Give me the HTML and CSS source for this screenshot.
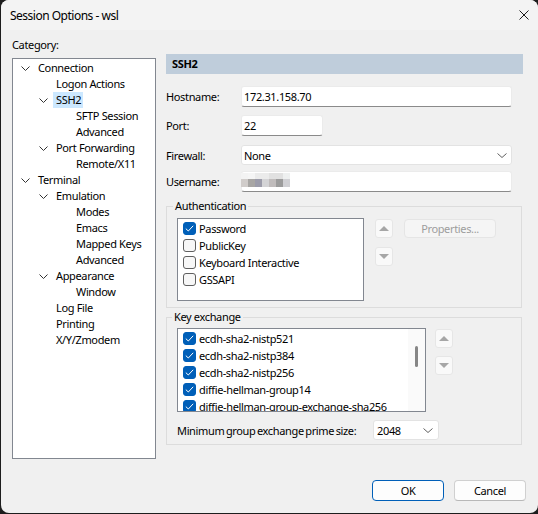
FILE: index.html
```html
<!DOCTYPE html>
<html>
<head>
<meta charset="utf-8">
<title>Session Options - wsl</title>
<link rel="stylesheet" href="styles.css">
</head>
<body>
<div class="window">
  <div class="titlebar">
    <span class="title">Session Options - wsl</span>
    <span class="close"><svg width="10" height="10" viewBox="0 0 10 10"><path d="M0.5 0.5 L9.5 9.5 M9.5 0.5 L0.5 9.5" stroke="#1a1a1a" stroke-width="1" fill="none"/></svg></span>
  </div>
  <div class="main">
    <div class="left">
      <div class="cat-label">Category:</div>
      <div class="tree">
        <div class="node l1"><span class="twisty"><svg width="9" height="5" viewBox="0 0 9 5"><path d="M0.5 0.5 L4.5 4.5 L8.5 0.5" stroke="#333" fill="none"/></svg></span><span class="txt">Connection</span></div>
        <div class="node l2"><span class="twisty"></span><span class="txt">Logon Actions</span></div>
        <div class="node l2"><span class="twisty"><svg width="9" height="5" viewBox="0 0 9 5"><path d="M0.5 0.5 L4.5 4.5 L8.5 0.5" stroke="#333" fill="none"/></svg></span><span class="txt sel">SSH2</span></div>
        <div class="node l3"><span class="twisty"></span><span class="txt">SFTP Session</span></div>
        <div class="node l3"><span class="twisty"></span><span class="txt">Advanced</span></div>
        <div class="node l2"><span class="twisty"><svg width="9" height="5" viewBox="0 0 9 5"><path d="M0.5 0.5 L4.5 4.5 L8.5 0.5" stroke="#333" fill="none"/></svg></span><span class="txt">Port Forwarding</span></div>
        <div class="node l3"><span class="twisty"></span><span class="txt">Remote/X11</span></div>
        <div class="node l1"><span class="twisty"><svg width="9" height="5" viewBox="0 0 9 5"><path d="M0.5 0.5 L4.5 4.5 L8.5 0.5" stroke="#333" fill="none"/></svg></span><span class="txt">Terminal</span></div>
        <div class="node l2"><span class="twisty"><svg width="9" height="5" viewBox="0 0 9 5"><path d="M0.5 0.5 L4.5 4.5 L8.5 0.5" stroke="#333" fill="none"/></svg></span><span class="txt">Emulation</span></div>
        <div class="node l3"><span class="twisty"></span><span class="txt">Modes</span></div>
        <div class="node l3"><span class="twisty"></span><span class="txt">Emacs</span></div>
        <div class="node l3"><span class="twisty"></span><span class="txt">Mapped Keys</span></div>
        <div class="node l3"><span class="twisty"></span><span class="txt">Advanced</span></div>
        <div class="node l2"><span class="twisty"><svg width="9" height="5" viewBox="0 0 9 5"><path d="M0.5 0.5 L4.5 4.5 L8.5 0.5" stroke="#333" fill="none"/></svg></span><span class="txt">Appearance</span></div>
        <div class="node l3"><span class="twisty"></span><span class="txt">Window</span></div>
        <div class="node l2"><span class="twisty"></span><span class="txt">Log File</span></div>
        <div class="node l2"><span class="twisty"></span><span class="txt">Printing</span></div>
        <div class="node l2"><span class="twisty"></span><span class="txt">X/Y/Zmodem</span></div>
      </div>
    </div>
    <div class="panel">
      <div class="header">SSH2</div>
      <div class="row r-host"><span class="lbl">Hostname:</span><div class="input wide">172.31.158.70</div></div>
      <div class="row r-port"><span class="lbl">Port:</span><div class="input narrow">22</div></div>
      <div class="row r-fw"><span class="lbl">Firewall:</span><div class="combo wide"><span>None</span><svg width="10" height="5" viewBox="0 0 10 5"><path d="M0.5 0.5 L5 4.5 L9.5 0.5" stroke="#606060" fill="none"/></svg></div></div>
      <div class="row r-user"><span class="lbl">Username:</span><div class="input wide"><div class="blur">
        <i class="c1"></i><i class="c2"></i><i class="c3"></i><i class="c3"></i><i class="c4"></i><i class="c4"></i><i class="c5"></i>
        <i class="d1"></i><i class="d2"></i><i class="d3"></i><i class="d4"></i><i class="d5"></i><i class="d6"></i><i class="d7"></i>
      </div></div></div>

      <fieldset class="group auth">
        <legend>Authentication</legend>
        <div class="group-body">
          <div class="listbox auth-list">
            <div class="item"><span class="cb on"><svg width="9" height="7" viewBox="0 0 9 7"><path d="M0.8 3.6 L3.3 6 L8.2 0.8" stroke="#fff" stroke-width="1" fill="none"/></svg></span>Password</div>
            <div class="item"><span class="cb"></span>PublicKey</div>
            <div class="item"><span class="cb"></span>Keyboard Interactive</div>
            <div class="item"><span class="cb"></span>GSSAPI</div>
          </div>
          <div class="arrows">
            <div class="arrow"><svg width="10" height="5" viewBox="0 0 10 5"><path d="M0 5 L5 0 L10 5 Z" fill="#a6a6a6"/></svg></div>
            <div class="arrow"><svg width="10" height="5" viewBox="0 0 10 5"><path d="M0 0 L5 5 L10 0 Z" fill="#a6a6a6"/></svg></div>
          </div>
          <div class="btn props">Properties...</div>
        </div>
      </fieldset>

      <fieldset class="group kex">
        <legend>Key exchange</legend>
        <div class="group-body">
          <div class="listbox kex-list">
            <div class="kex-items">
              <div class="item"><span class="cb on"><svg width="9" height="7" viewBox="0 0 9 7"><path d="M0.8 3.6 L3.3 6 L8.2 0.8" stroke="#fff" stroke-width="1" fill="none"/></svg></span>ecdh-sha2-nistp521</div>
              <div class="item"><span class="cb on"><svg width="9" height="7" viewBox="0 0 9 7"><path d="M0.8 3.6 L3.3 6 L8.2 0.8" stroke="#fff" stroke-width="1" fill="none"/></svg></span>ecdh-sha2-nistp384</div>
              <div class="item"><span class="cb on"><svg width="9" height="7" viewBox="0 0 9 7"><path d="M0.8 3.6 L3.3 6 L8.2 0.8" stroke="#fff" stroke-width="1" fill="none"/></svg></span>ecdh-sha2-nistp256</div>
              <div class="item"><span class="cb on"><svg width="9" height="7" viewBox="0 0 9 7"><path d="M0.8 3.6 L3.3 6 L8.2 0.8" stroke="#fff" stroke-width="1" fill="none"/></svg></span>diffie-hellman-group14</div>
              <div class="item"><span class="cb on"><svg width="9" height="7" viewBox="0 0 9 7"><path d="M0.8 3.6 L3.3 6 L8.2 0.8" stroke="#fff" stroke-width="1" fill="none"/></svg></span>diffie-hellman-group-exchange-sha256</div>
            </div>
            <div class="scrollbar"><div class="thumb"></div></div>
          </div>
          <div class="arrows kex-arrows">
            <div class="arrow"><svg width="10" height="5" viewBox="0 0 10 5"><path d="M0 5 L5 0 L10 5 Z" fill="#a6a6a6"/></svg></div>
            <div class="arrow"><svg width="10" height="5" viewBox="0 0 10 5"><path d="M0 0 L5 5 L10 0 Z" fill="#a6a6a6"/></svg></div>
          </div>
        </div>
        <div class="prime-row">
          <span class="prime-lbl">Minimum group exchange prime size:</span>
          <div class="combo small"><span>2048</span><svg width="10" height="5" viewBox="0 0 10 5"><path d="M0.5 0.5 L5 4.5 L9.5 0.5" stroke="#606060" fill="none"/></svg></div>
        </div>
      </fieldset>
    </div>
  </div>
  <div class="footer">
    <div class="btn dlg ok">OK</div>
    <div class="btn dlg">Cancel</div>
  </div>
</div>
</body>
</html>
```

FILE: styles.css
```css
* { box-sizing: border-box; }
html, body { margin: 0; padding: 0; }
body {
  background: #1d1d1d;
  width: 538px;
  height: 514px;
  overflow: hidden;
  font-family: "Noto Sans", "Open Sans", sans-serif;
  font-size: 11px;
  letter-spacing: -0.35px;
  color: #000;
}
.window {
  width: 537px;
  height: 513px;
  margin-left: 1px;
  background: #f0f0f0;
  border-radius: 8px;
  overflow: hidden;
  display: flex;
  flex-direction: column;
}
.titlebar {
  height: 30px;
  flex: none;
  background: #f3f3f3;
  display: flex;
  align-items: center;
  justify-content: space-between;
  padding: 0 9px 0 9px;
  font-size: 12px;
  letter-spacing: -0.5px;
}
.close { display: flex; width: 10px; height: 10px; }
.main {
  display: flex;
  gap: 10px;
  padding: 0 15px 0 11px;
}
.left { width: 144px; flex: none; }
.cat-label { margin-top: 7px; line-height: 16px; }
.tree {
  margin-top: 5px;
  height: 401px;
  background: #fff;
  border: 1px solid #828790;
  padding-top: 1px;
}
.node { display: flex; align-items: center; height: 16px; line-height: 16px; white-space: nowrap; }
.node.l1 { padding-left: 7px; }
.node.l2 { padding-left: 25px; }
.node.l3 { padding-left: 45px; }
.twisty { width: 15px; flex: none; display: flex; align-items: center; padding-left: 1px; }
.twisty svg { display: block; }
.txt { padding: 0 2px 0 3px; height: 16px; }
.txt.sel { background: #cce8ff; }
.panel { width: 357px; flex: none; padding-top: 24px; }
.header {
  height: 20px;
  line-height: 20px;
  background: #bfcddb;
  font-weight: bold;
  padding-left: 6px;
}
.row { display: flex; align-items: center; }
.lbl { width: 75px; flex: none; }
.r-host { margin-top: 12px; }
.r-port { margin-top: 8px; }
.r-fw { margin-top: 9px; }
.r-user { margin-top: 6px; }
.input {
  height: 21px;
  background: #fff;
  border: 1px solid #ebebeb;
  border-bottom-color: #8a8a8a;
  border-radius: 3px;
  padding-left: 2px;
  line-height: 19px;
  display: flex;
  align-items: center;
}
.wide { width: 271px; }
.narrow { width: 82px; }
.combo {
  height: 20px;
  background: #fff;
  border: 1px solid #e3e3e3;
  border-radius: 3px;
  padding: 0 4px 0 2px;
  display: flex;
  align-items: center;
  justify-content: space-between;
}
.combo svg { display: block; }
.blur {
  display: grid;
  grid-template-columns: repeat(7, 7px);
  grid-template-rows: 6px 8px;
  margin-left: -3px;
  margin-top: -3px;
}
.blur i { display: block; }
.c1 { background: #f3f3f3; }
.c2 { background: #f5f5f5; }
.c3 { background: #ebebeb; }
.c4 { background: #e1e1e1; }
.c5 { background: #eef0f0; }
.d1 { background: #d0ccca; }
.d2 { background: #a8a6a4; }
.d3 { background: #9c9caa; }
.d4 { background: #d4d4d6; }
.d5 { background: #c0bcbc; }
.d6 { background: #9c9c9c; }
.d7 { background: #d0d0d4; }

.group {
  margin: 0;
  padding: 0 10px;
  border: 1px solid #dcdcdc;
  border-radius: 0;
  width: 356px;
  min-width: 0;
}
.group legend {
  margin-left: -4px;
  padding: 0 2px;
  line-height: 16px;
}
.kex legend { margin-left: -5px; }
.auth { margin-top: 6px; padding-bottom: 6px; }
.kex { margin-top: 1px; padding-bottom: 4px; }
.group-body { display: flex; align-items: flex-start; }
.listbox {
  background: #fff;
  border: 1px solid #828790;
  overflow: hidden;
}
.auth-list { width: 187px; height: 83px; margin-top: 4px; padding-top: 1px; }
.item { display: flex; align-items: center; height: 17px; padding-left: 5px; white-space: nowrap; }
.cb {
  width: 13px; height: 13px; flex: none;
  border: 1px solid #5f5f5f;
  border-radius: 3px;
  background: #f7f7f7;
  margin-right: 3px;
  display: flex; align-items: center; justify-content: center;
}
.cb.on { background: #005fb8; border-color: #005fb8; }
.cb svg { display: block; }
.arrows { display: flex; flex-direction: column; gap: 9px; margin-left: 11px; margin-top: 5px; }
.arrow {
  width: 18px; height: 19px;
  background: #f9f9f9;
  border: 1px solid #e6e6e6;
  border-radius: 3px;
  display: flex; align-items: center; justify-content: center;
}
.arrow svg { display: block; }
.btn {
  display: flex; align-items: center; justify-content: center;
  border-radius: 4px;
}
.props {
  width: 92px; height: 19px;
  margin-left: 11px; margin-top: 5px;
  background: #f5f5f5;
  border: 1px solid #e5e5e5;
  color: #9d9d9d;
}
.kex-list { width: 249px; height: 84px; margin-top: 3px; display: flex; }
.kex-items { flex: 1; padding-top: 1px; overflow: hidden; }
.scrollbar { width: 17px; flex: none; background: #fafafa; padding-top: 17px; display: flex; justify-content: center; }
.thumb { width: 3px; height: 21px; background: #868686; border-radius: 2px; }
.kex-arrows { margin-left: 9px; margin-top: 4px; gap: 8px; }
.prime-row { display: flex; align-items: center; margin-top: 8px; }
.prime-lbl { width: 196px; flex: none; word-spacing: -1px; }
.combo.small { width: 66px; padding-right: 5px; padding-left: 3px; }
.footer {
  display: flex;
  justify-content: flex-end;
  gap: 10px;
  padding: 21px 12px 0 0;
}
.dlg {
  width: 72px; height: 21px;
  background: #fdfdfd;
  border: 1px solid #d0d0d0;
  border-bottom-color: #b8b8b8;
}
.dlg.ok { border-color: #005fb8; }
```
